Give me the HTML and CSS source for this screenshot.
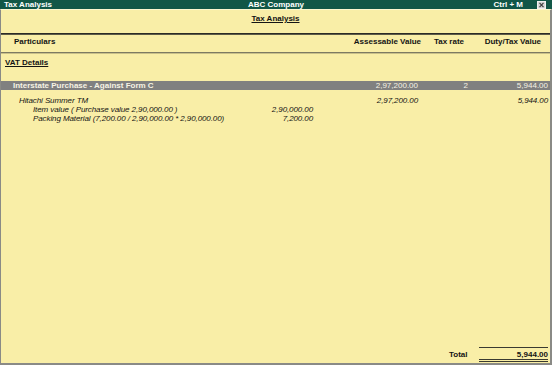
FILE: index.html
```html
<!DOCTYPE html>
<html>
<head>
<meta charset="utf-8">
<link rel="stylesheet" href="styles.css">
</head>
<body>
<div class="win">
  <div class="titlebar">
    <span class="tb-left">Tax Analysis</span>
    <span class="tb-center">ABC Company</span>
    <span class="tb-right">Ctrl + M
      <svg class="close" width="9" height="8" viewBox="0 0 9 8">
        <rect x="0.5" y="0.5" width="8" height="7" fill="#d8d8d8" stroke="#f0f0f0"/>
        <path d="M2.5 1.8 L6.5 6.2 M6.5 1.8 L2.5 6.2" stroke="#404040" stroke-width="1.2"/>
      </svg>
    </span>
  </div>
  <div class="body">
    <div class="heading"><span class="ul">Tax Analysis</span></div>
    <div class="rule-dark"></div>
    <div class="grid colhead">
      <div class="c-label">Particulars</div>
      <div></div>
      <div class="h-assess">Assessable Value</div>
      <div class="h-rate">Tax rate</div>
      <div class="h-duty">Duty/Tax Value</div>
    </div>
    <div class="rule-light"></div>
    <div class="section"><span class="ul">VAT Details</span></div>
    <div class="grid row band">
      <div class="c-label ind1">Interstate Purchase - Against Form C</div>
      <div></div>
      <div class="num">2,97,200.00</div>
      <div class="num">2</div>
      <div class="num">5,944.00</div>
    </div>
    <div class="grid row it first">
      <div class="c-label ind2">Hitachi Summer TM</div>
      <div></div>
      <div class="num">2,97,200.00</div>
      <div></div>
      <div class="num">5,944.00</div>
    </div>
    <div class="grid row it">
      <div class="c-label ind3">Item value ( Purchase value 2,90,000.00 )</div>
      <div class="num">2,90,000.00</div>
      <div></div>
      <div></div>
      <div></div>
    </div>
    <div class="grid row it">
      <div class="c-label ind3">Packing Material (7,200.00 / 2,90,000.00 * 2,90,000.00)</div>
      <div class="num">7,200.00</div>
      <div></div>
      <div></div>
      <div></div>
    </div>
    <div class="spacer"></div>
    <div class="total">
      <span class="total-label">Total</span>
      <span class="total-val">5,944.00</span>
    </div>
  </div>
</div>
</body>
</html>
```

FILE: styles.css
```css
* { box-sizing: border-box; margin: 0; padding: 0; }
html, body { width: 552px; height: 365px; overflow: hidden; }
body {
  font-family: "Liberation Sans", Arial, sans-serif;
  font-size: 8px;
  color: #141414;
  background: #f9eea7;
}
.win {
  width: 552px;
  height: 365px;
  display: flex;
  flex-direction: column;
}
.titlebar {
  height: 9px;
  background: #125747;
  color: #ffffff;
  font-weight: bold;
  line-height: 9px;
  display: flex;
  align-items: center;
  padding: 0 4px;
}
.tb-left { flex: 1; }
.tb-center { flex: none; }
.tb-right {
  flex: 1;
  display: flex;
  justify-content: flex-end;
  align-items: center;
}
.close { margin-left: 14px; margin-right: 2px; display: block; }
.body {
  flex: 1;
  display: flex;
  flex-direction: column;
  border-left: 1px solid #8a8a86;
  border-right: 2px solid #8a8a86;
  border-bottom: 2px solid #8a8a86;
  border-top: 1px solid #fdf7cf;
}
.heading {
  height: 23px;
  text-align: center;
  font-weight: bold;
  padding-top: 4px;
  line-height: 10px;
}
.ul { text-decoration: underline; text-underline-offset: 1px; }
.rule-dark {
  height: 2px;
  border-top: 1px solid #2b2b26;
  border-bottom: 1px solid #5d5b48;
}
.rule-light {
  height: 2px;
  border-top: 1px solid #7d7a62;
  border-bottom: 1px solid #c9c08a;
}
.grid {
  display: grid;
  grid-template-columns: 1fr 70px 105px 50px 80px;
  padding-right: 2px;
}
.colhead {
  font-weight: bold;
  height: 17px;
  padding-top: 2px;
  line-height: 10px;
}
.colhead .c-label { padding-left: 13px; }
.h-assess { text-align: right; margin-right: -3px; }
.h-rate { text-align: right; padding-right: 4px; }
.h-duty { text-align: right; padding-right: 7px; }
.section {
  font-weight: bold;
  padding-left: 4px;
  margin-top: 4px;
  line-height: 10px;
  height: 23px;
}
.row { line-height: 9px; height: 9px; }
.num { text-align: right; }
.band {
  background: #808080;
  color: #f6f3e4;
  font-weight: bold;
}
.band .num { font-weight: normal; }
.it { font-style: italic; letter-spacing: -0.1px; }
.first { margin-top: 6px; }
.ind1 { padding-left: 12px; }
.ind2 { padding-left: 18px; }
.ind3 { padding-left: 32px; }
.spacer { flex: 1; }
.total {
  display: flex;
  justify-content: flex-end;
  align-items: flex-start;
  height: 15px;
  margin-bottom: 1px;
  margin-right: 2px;
  font-weight: bold;
}
.total-label { padding-top: 3px; width: 30px; line-height: 9px; }
.total-val {
  width: 69px;
  text-align: right;
  border-top: 1px solid #3a3a30;
  border-bottom: 3px double #3a3a30;
  padding-top: 2px;
  height: 15px;
  line-height: 9px;
}
```
